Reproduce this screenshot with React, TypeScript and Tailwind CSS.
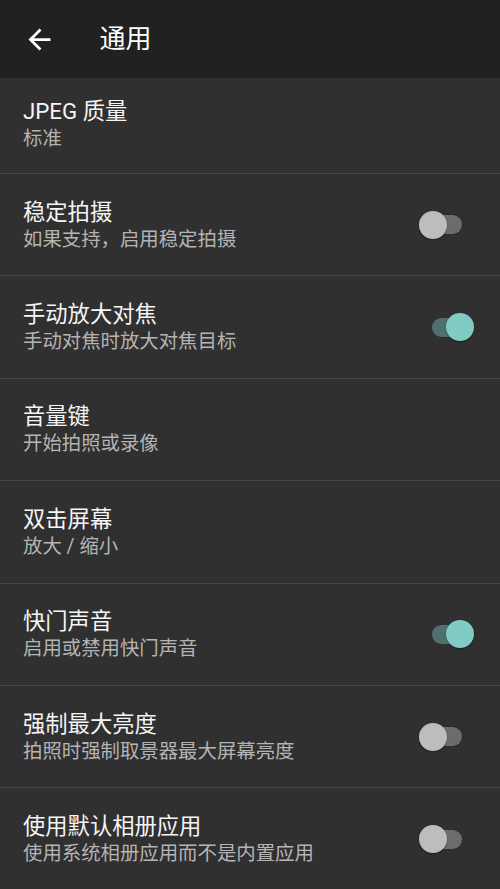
const font = { fontFamily: "Roboto, 'Noto Sans CJK SC', sans-serif" };

type Pref = {
  title: string;
  summary: string;
  toggle?: "on" | "off";
};

const prefs: Pref[] = [
  { title: "JPEG 质量", summary: "标准" },
  { title: "稳定拍摄", summary: "如果支持，启用稳定拍摄", toggle: "off" },
  { title: "手动放大对焦", summary: "手动对焦时放大对焦目标", toggle: "on" },
  { title: "音量键", summary: "开始拍照或录像" },
  { title: "双击屏幕", summary: "放大 / 缩小" },
  { title: "快门声音", summary: "启用或禁用快门声音", toggle: "on" },
  { title: "强制最大亮度", summary: "拍照时强制取景器最大屏幕亮度", toggle: "off" },
  { title: "使用默认相册应用", summary: "使用系统相册应用而不是内置应用", toggle: "off" },
];

function Switch({ on }: { on: boolean }) {
  return (
    <div className="relative mb-[2px] mr-[25px] h-[28px] w-[56px] shrink-0">
      <div
        className={`absolute left-[13px] top-[4.5px] h-[19px] w-[30px] rounded-full ${on ? "bg-[#4f716e]" : "bg-[#6c6c6c]"}`}
      />
      <div
        className={`absolute top-0 h-[28px] w-[28px] rounded-full shadow-[0_1px_2px_rgba(0,0,0,0.35)] ${on ? "left-[27px] bg-[#80cbc4]" : "left-0 bg-[#bdbdbd]"}`}
      />
    </div>
  );
}

function Row({ pref, first }: { pref: Pref; first: boolean }) {
  return (
    <div
      className={`flex items-center justify-between pl-[23px] ${first ? "h-[95px] pb-[1px]" : "h-[102.4px] border-t border-[#464646] pt-[2px]"}`}
    >
      <div className="flex flex-col">
        <span className="text-[22.3px] leading-[28px] text-[#f5f5f5]">{pref.title}</span>
        <span className="text-[19.4px] leading-[28px] text-[#b4b4b4]">{pref.summary}</span>
      </div>
      {pref.toggle ? <Switch on={pref.toggle === "on"} /> : null}
    </div>
  );
}

export default function App() {
  return (
    <div className="flex h-[889px] w-[500px] flex-col overflow-hidden bg-[#303030]" style={font}>
      <header className="flex h-[78px] shrink-0 items-center bg-[#212121]">
        <svg viewBox="0 0 24 24" className="ml-[22.5px] h-[33px] w-[33px] fill-white">
          <path d="M20 11H7.83l5.59-5.59L12 4l-8 8 8 8 1.41-1.41L7.83 13H20v-2z" />
        </svg>
        <h1 className="ml-[44px] text-[26px] leading-none text-white">通用</h1>
      </header>
      <div className="flex flex-col">
        {prefs.map((p, i) => (
          <Row key={p.title} pref={p} first={i === 0} />
        ))}
      </div>
    </div>
  );
}
